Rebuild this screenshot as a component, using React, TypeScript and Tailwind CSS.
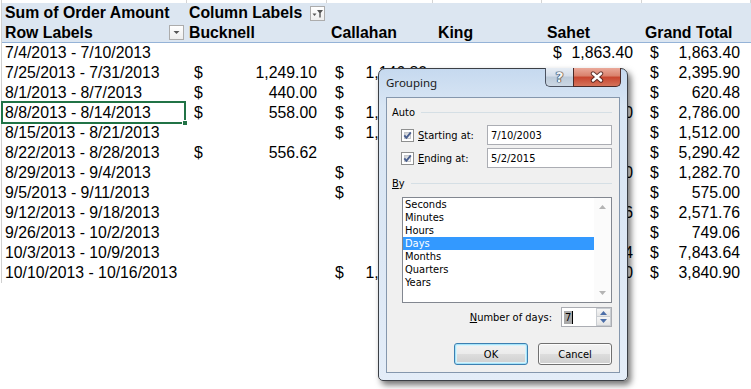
import React from "react";

type Row = { label: string; b?: string; c?: string; d?: string; e?: string; f: string };

const ROWS: Row[] = [
  { label: "7/4/2013 - 7/10/2013", e: "1,863.40", f: "1,863.40" },
  { label: "7/25/2013 - 7/31/2013", b: "1,249.10", c: "1,146.80", f: "2,395.90" },
  { label: "8/1/2013 - 8/7/2013", b: "440.00", c: "180.48", f: "620.48" },
  { label: "8/8/2013 - 8/14/2013", b: "558.00", c: "1,028.00", e: "1,200.00", f: "2,786.00" },
  { label: "8/15/2013 - 8/21/2013", c: "1,512.00", f: "1,512.00" },
  { label: "8/22/2013 - 8/28/2013", b: "556.62", d: "4,733.80", f: "5,290.42" },
  { label: "8/29/2013 - 9/4/2013", c: "482.70", e: "800.00", f: "1,282.70" },
  { label: "9/5/2013 - 9/11/2013", c: "575.00", f: "575.00" },
  { label: "9/12/2013 - 9/18/2013", e: "2,571.76", f: "2,571.76" },
  { label: "9/26/2013 - 10/2/2013", d: "749.06", f: "749.06" },
  { label: "10/3/2013 - 10/9/2013", e: "7,843.64", f: "7,843.64" },
  { label: "10/10/2013 - 10/16/2013", c: "1,250.00", e: "2,590.90", f: "3,840.90" },
];

const COL = ["w-[185px]", "w-[140px]", "w-[106px]", "w-[109px]", "w-[100px]", "w-[109px]"];
const MONEY_PAD = ["", "pl-[7px] pr-[10px]", "pl-[8px] pr-[6px]", "pl-[8px] pr-[10px]", "pl-[11px] pr-[9px]", "pl-[8px] pr-[11px]"];
const HEAD_PAD = ["pl-[3px]", "pl-[2px]", "pl-[4px]", "pl-[5px]", "pl-[5px]", "pl-[3px]"];
const HEADS = ["Row Labels", "Bucknell", "Callahan", "King", "Sahet", "Grand Total"];
const UNITS = ["Seconds", "Minutes", "Hours", "Days", "Months", "Quarters", "Years"];

function Money({ col, value }: { col: number; value?: string }) {
  return (
    <div className={`flex shrink-0 ${COL[col]} ${MONEY_PAD[col]}`}>
      {value && (
        <>
          <span>$</span>
          <span className="ml-auto">{value}</span>
        </>
      )}
    </div>
  );
}

function DropButton({ funnel }: { funnel?: boolean }) {
  return (
    <div className="flex h-[15px] w-[15px] shrink-0 items-center justify-center border border-[#acacac] bg-[linear-gradient(#ffffff,#eeeeee)]">
      {funnel ? (
        <svg width="13" height="13" viewBox="0 0 13 13">
          <path d="M1.5 6.5h4l-2 2.5z" fill="#555" />
          <path d="M6 3h6l-2.3 3v4.5h-1.4V6z" fill="#555" />
        </svg>
      ) : (
        <svg width="9" height="5" viewBox="0 0 9 5">
          <path d="M1.5 1h6l-3 3z" fill="#555" />
        </svg>
      )}
    </div>
  );
}

function Sheet() {
  return (
    <div className="ml-px flex w-[750px] flex-col border-l border-[#d0d0d0] font-['Liberation_Sans',Arial,sans-serif] text-[15.8px] leading-[20px] text-black">
      <div className="flex h-[3px]">
        {COL.map((w, i) => (
          <div key={i} className={`shrink-0 border-r border-[#d4d4d4] ${w}`} />
        ))}
      </div>
      <div className="flex h-[20px] bg-[#dce6f1] font-bold">
        <div className={`shrink-0 ${COL[0]} pl-[3px]`}>Sum of Order Amount</div>
        <div className={`flex shrink-0 items-center ${COL[1]} pl-[2px] pr-[2px]`}>
          <span>Column Labels</span>
          <div className="ml-auto">
            <DropButton funnel />
          </div>
        </div>
        <div className="flex-1" />
      </div>
      <div className="flex h-[20px] border-b border-[#95b3d7] bg-[#dce6f1] font-bold">
        {HEADS.map((h, i) =>
          i === 0 ? (
            <div key={i} className={`flex shrink-0 items-center ${COL[0]} pl-[3px] pr-[3px]`}>
              <span>{h}</span>
              <div className="ml-auto">
                <DropButton />
              </div>
            </div>
          ) : (
            <div key={i} className={`shrink-0 whitespace-nowrap ${COL[i]} ${HEAD_PAD[i]}`}>
              {h}
            </div>
          )
        )}
      </div>
      {ROWS.map((r, idx) => (
        <div key={r.label} className="flex h-[20px] whitespace-nowrap">
          <div className={`relative shrink-0 ${COL[0]} pl-[3px]`}>
            {r.label}
            {idx === 3 && (
              <>
                <div className="absolute -left-[1px] -top-[2px] right-[1px] -bottom-[1px] border-2 border-[#217346]" />
                <div className="absolute -right-[1px] -bottom-[3px] h-[6px] w-[6px] border border-white bg-[#217346]" />
              </>
            )}
          </div>
          <Money col={1} value={r.b} />
          <Money col={2} value={r.c} />
          <Money col={3} value={r.d} />
          <Money col={4} value={r.e} />
          <Money col={5} value={r.f} />
        </div>
      ))}
    </div>
  );
}

function CheckBox() {
  return (
    <div className="relative h-[13px] w-[13px] shrink-0 border border-[#8e8f8f] bg-white p-[2px]">
      <div className="h-full w-full border border-[#c4c6ca] bg-[linear-gradient(135deg,#cfd2d6,#f5f5f5)]" />
      <svg className="absolute left-0 top-0" width="11" height="11" viewBox="0 0 11 11">
        <path d="M2.3 5.4 4.4 7.8 8.8 2.4" fill="none" stroke="#4a5f8f" strokeWidth="1.9" />
      </svg>
    </div>
  );
}

function GroupHead({ children, className }: { children: React.ReactNode; className: string }) {
  return (
    <div className={`flex h-[13px] items-center ${className}`}>
      <span>{children}</span>
      <div className="ml-[6px] h-px flex-1 bg-[#d5dfe5]" />
    </div>
  );
}

function DateRow({ label, rest, value, className }: { label: string; rest: string; value: string; className: string }) {
  return (
    <div className={`flex h-[20px] items-center pl-[9px] ${className}`}>
      <CheckBox />
      <div className="ml-[4px] w-[69px] shrink-0">
        <u>{label}</u>
        {rest}
      </div>
      <div className="flex h-[20px] w-[125px] items-center border border-[#abadb3] bg-white pl-[3px]">{value}</div>
    </div>
  );
}

function Arrow({ up, color }: { up?: boolean; color: string }) {
  return (
    <svg width="7" height="4" viewBox="0 0 7 4">
      <path d={up ? "M0 4h7L3.5 0z" : "M0 0h7L3.5 4z"} fill={color} />
    </svg>
  );
}

function Dialog() {
  return (
    <div className="absolute left-[378px] top-[68px] flex h-[313px] w-[250px] flex-col rounded-t-[7px] rounded-b-[5px] border border-[#3b3f45] bg-[linear-gradient(#c6d9ef,#d9e6f4_12%,#dde8f5_60%,#e4edf8)] px-[7px] pb-[7px] shadow-[3px_4px_6px_rgba(0,0,0,0.55)]">
      <div className="flex h-[28px] shrink-0 items-start">
        <div className="self-center font-['Noto_Sans',sans-serif] text-[11.5px] text-[#1a1a1a]">Grouping</div>
        <div className="-mr-px -mt-px ml-auto flex h-[19px]">
          <div className="flex w-[28px] items-center justify-center rounded-bl-[5px] border border-r-0 border-t-0 border-[#4b5260] bg-[linear-gradient(#e7edf4,#d4dde9_45%,#bccad9_50%,#ccd7e3)] font-['DejaVu_Sans',sans-serif] text-[14px] font-bold leading-none text-[#f4f6f8] [text-shadow:0_0_1px_#2d3440,0_0_1px_#2d3440,0_0_1px_#2d3440,0_0_1px_#2d3440]">
            ?
          </div>
          <div className="flex w-[48px] items-center justify-center rounded-br-[5px] border border-t-0 border-[#4a2a28] bg-[linear-gradient(#eaa99a,#d9806b_45%,#c7442e_50%,#d5735a)]">
            <svg width="14" height="12" viewBox="0 0 14 12">
              <path d="M3 2.5 11 9.5M11 2.5 3 9.5" stroke="#3a1a18" strokeWidth="4.4" strokeLinecap="round" strokeOpacity="0.75" />
              <path d="M3 2.5 11 9.5M11 2.5 3 9.5" stroke="#ffffff" strokeWidth="2.5" strokeLinecap="round" />
            </svg>
          </div>
        </div>
      </div>
      <div className="flex flex-1 flex-col border border-[#8597ad] bg-[#f0f0f0] pl-[5px] pr-[7px] font-['DejaVu_Sans_Condensed','DejaVu_Sans',sans-serif] text-[11px] leading-[13px] text-black">
        <GroupHead className="mt-[8px]">Auto</GroupHead>
        <DateRow className="mt-[6px]" label="S" rest="tarting at:" value="7/10/2003" />
        <DateRow className="mt-[3px]" label="E" rest="nding at:" value="5/2/2015" />
        <GroupHead className="mt-[9px]">
          <u>B</u>y
        </GroupHead>
        <div className="ml-[10px] mt-[7px] flex h-[106px] w-[210px] border border-[#828790] bg-white">
          <div className="flex-1">
            {UNITS.map((u) => (
              <div key={u} className={`h-[13px] pl-[2px] ${u === "Days" ? "bg-[#3399ff] text-white" : ""}`}>
                {u}
              </div>
            ))}
          </div>
          <div className="flex w-[17px] flex-col items-center justify-between bg-[#fbfbfb] py-[7px]">
            <Arrow up color="#b4b4b4" />
            <Arrow color="#b4b4b4" />
          </div>
        </div>
        <div className="mt-[4px] flex h-[20px] items-center justify-end">
          <span className="mr-[9px]">
            <u>N</u>umber of days:
          </span>
          <div className="flex h-[20px] w-[51px] border border-[#abadb3] bg-white">
            <div className="flex flex-1 items-center pl-[2px]">
              <span className="bg-[#a9a9a9] px-px">7</span>
              <span className="h-[13px] w-px bg-black" />
            </div>
            <div className="flex w-[15px] flex-col">
              <div className="flex h-[9px] items-center justify-center border border-[#c9cdd2] bg-[linear-gradient(#f6f6f6,#e4e4e4)]">
                <Arrow up color="#4c6ea8" />
              </div>
              <div className="flex h-[9px] items-center justify-center border border-t-0 border-[#c9cdd2] bg-[linear-gradient(#f6f6f6,#e4e4e4)]">
                <Arrow color="#4c6ea8" />
              </div>
            </div>
          </div>
        </div>
        <div className="mt-[16px] flex justify-end gap-[10px]">
          <button className="flex h-[22px] w-[74px] items-center justify-center rounded-[3px] border border-[#3c7fb1] bg-[linear-gradient(#f2f2f2,#ebebeb_50%,#dddddd_50%,#cfcfcf)] shadow-[inset_0_0_0_1px_#a6e4f9,inset_0_0_0_2px_#d8f2fc]">
            OK
          </button>
          <button className="flex h-[22px] w-[74px] items-center justify-center rounded-[3px] border border-[#707070] bg-[linear-gradient(#f2f2f2,#ebebeb_50%,#dddddd_50%,#cfcfcf)] shadow-[inset_0_0_0_1px_#fcfcfc]">
            Cancel
          </button>
        </div>
      </div>
    </div>
  );
}

export default function App() {
  return (
    <div className="relative h-[389px] w-[751px] overflow-hidden bg-white">
      <Sheet />
      <Dialog />
    </div>
  );
}
